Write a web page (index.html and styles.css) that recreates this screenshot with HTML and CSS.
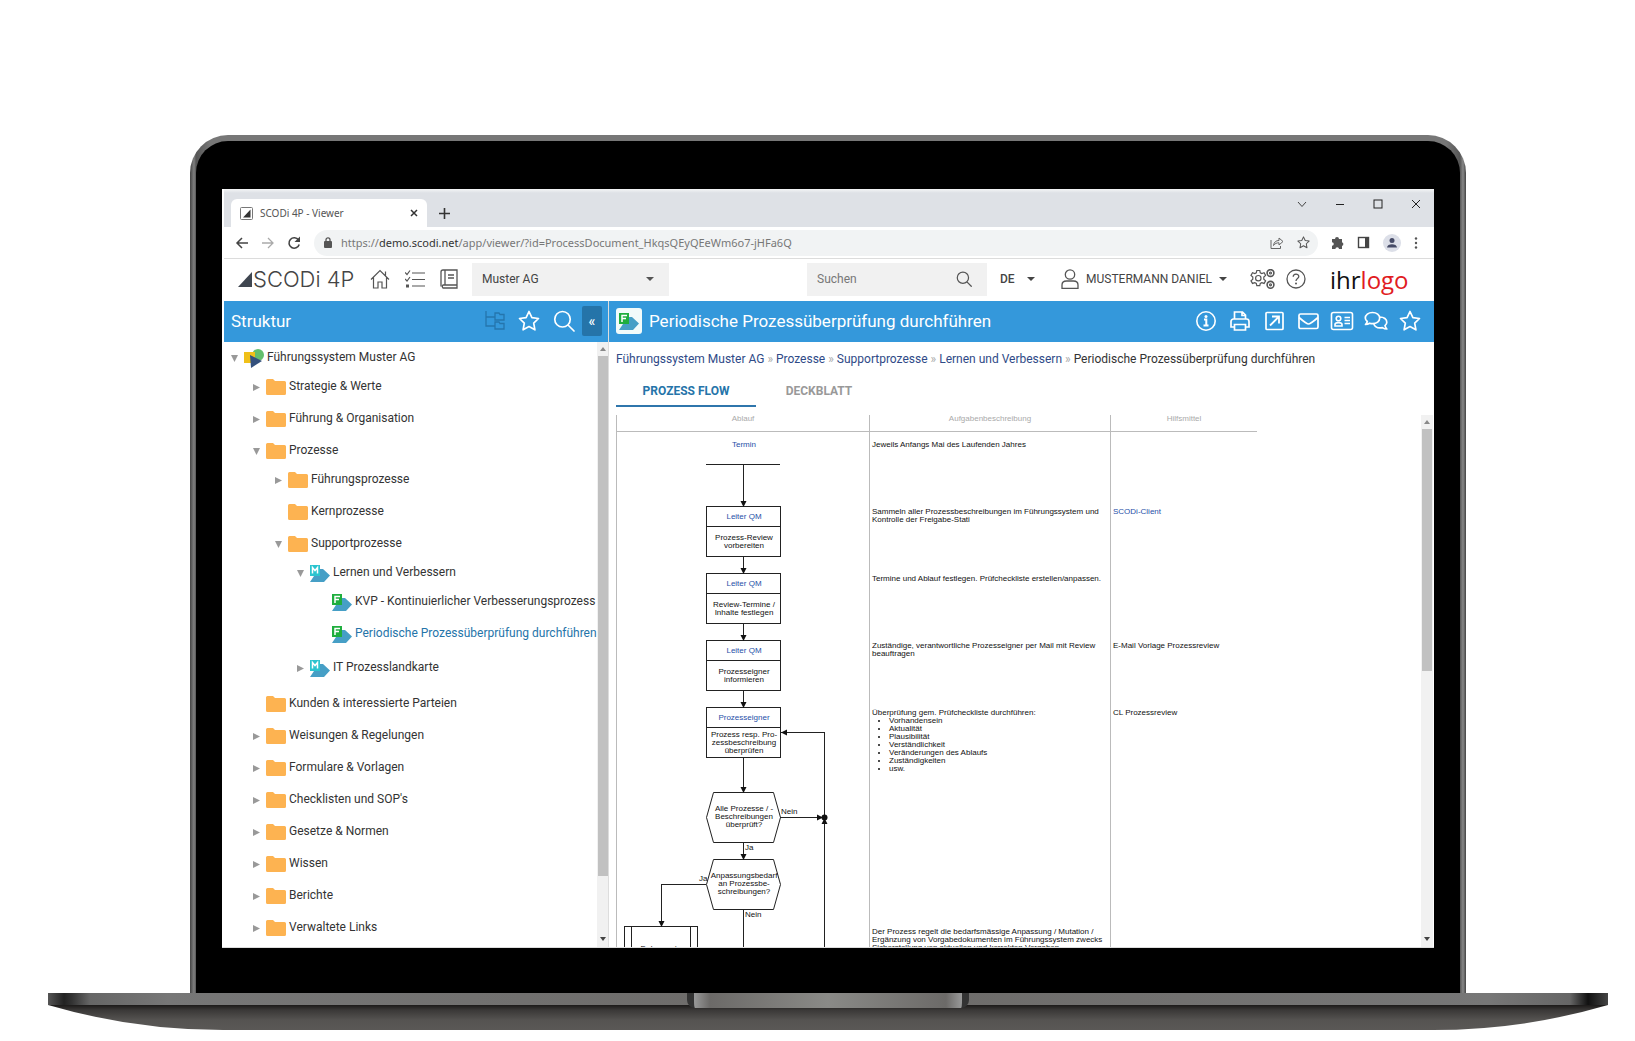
FILE: index.html
```html
<!DOCTYPE html>
<html lang="de">
<head>
<meta charset="utf-8">
<title>SCODi 4P - Viewer</title>
<link rel="stylesheet" href="styles.css">
</head>
<body>
<svg class="defs" aria-hidden="true">
  <symbol id="i-folder" viewBox="0 0 20 16"><path fill="#fdb351" d="M1.500 0H7l2 2h9.500A1.500 1.500 0 0 1 20 3.500v11a1.500 1.500 0 0 1-1.500 1.500h-17A1.500 1.500 0 0 1 0 14.500v-13A1.500 1.500 0 0 1 1.500 0z"/></symbol>
  <symbol id="i-map" viewBox="0 0 20 17"><path fill="#469fc6" d="M0 17l4-6V4h9l7 6.500-6 6.500z"/><rect width="10" height="11" fill="#2bc4cf"/><path fill="none" stroke="#fff" stroke-width="1.500" d="M2.500 8.500V2.500l2.500 3 2.500-3v6"/></symbol>
  <symbol id="i-flow" viewBox="0 0 20 17"><path fill="#469fc6" d="M0 17l4-6V4h9l7 6.500-6 6.500z"/><rect width="10" height="11" fill="#1fae3e"/><path fill="none" stroke="#fff" stroke-width="1.500" d="M3 9V2.500h5M3 5.500h4"/></symbol>
  <symbol id="i-star" viewBox="0 0 22 22"><path fill="none" stroke="currentColor" stroke-width="1.700" stroke-linejoin="round" d="M11 1.500l2.900 6.100 6.600.9-4.800 4.600 1.200 6.700-5.900-3.200-5.900 3.200 1.200-6.700L1.500 8.500l6.600-.9z"/></symbol>
  <symbol id="i-search" viewBox="0 0 22 22"><path fill="none" stroke="currentColor" stroke-width="1.700" stroke-linecap="round" d="M9.500 1.500a7.500 7.500 0 1 1 0 15.500A7.500 7.500 0 0 1 9.500 1.500zM15 15L21 21"/></symbol>
</svg>

<div class="laptop">
  <div class="lid">
    <div class="bezel">
      <div class="screen">

        <div class="tabstrip">
          <div class="browser-tab">
            <svg class="favicon" viewBox="0 0 13 13"><rect x=".5" y=".5" width="12" height="12" rx="1" fill="#fff" stroke="#777"/><path fill="#333" d="M3 10.500L10.500 2.500v8z"/></svg>
            <span class="tab-title">SCODi 4P - Viewer</span>
            <button class="bare" aria-label="Tab schliessen"><svg width="8" height="8" viewBox="0 0 8 8"><path stroke="#333" stroke-width="1.500" d="M1 1l6 6M7 1L1 7"/></svg></button>
          </div>
          <button class="bare new-tab" aria-label="Neuer Tab"><svg width="11" height="11" viewBox="0 0 11 11"><path stroke="#333" stroke-width="1.600" d="M5.500 0v11M0 5.500h11"/></svg></button>
          <div class="window-controls">
            <button class="bare" aria-label="Tabs suchen"><svg width="12" height="12" viewBox="0 0 12 12"><path fill="none" stroke="#444" d="M2 4l4 4.500L10 4"/></svg></button>
            <button class="bare" aria-label="Minimieren"><svg width="12" height="12" viewBox="0 0 12 12"><path stroke="#222" d="M2 6.500h8"/></svg></button>
            <button class="bare" aria-label="Maximieren"><svg width="12" height="12" viewBox="0 0 12 12"><rect x="2" y="2" width="8" height="8" fill="none" stroke="#222"/></svg></button>
            <button class="bare" aria-label="Schliessen"><svg width="12" height="12" viewBox="0 0 12 12"><path stroke="#222" d="M2 2l8 8M10 2l-8 8"/></svg></button>
          </div>
        </div>

        <div class="toolbar">
          <div class="history">
            <button class="bare" aria-label="Zurück"><svg width="14" height="14" viewBox="0 0 14 14"><path fill="none" stroke="#444" stroke-width="1.500" d="M13 7H2M7 2L2 7l5 5"/></svg></button>
            <button class="bare" aria-label="Vorwärts"><svg width="14" height="14" viewBox="0 0 14 14"><path fill="none" stroke="#aaa" stroke-width="1.300" d="M1 7h11M7 2l5 5-5 5"/></svg></button>
            <button class="bare" aria-label="Neu laden"><svg width="14" height="14" viewBox="0 0 14 14"><path fill="none" stroke="#444" stroke-width="1.600" d="M11.500 4A5.200 5.200 0 1 0 12.200 8.500"/><path fill="#444" d="M13 .5v5.500H7.500z"/></svg></button>
          </div>
          <div class="address">
            <svg width="8" height="11" viewBox="0 0 8 11"><rect y="4" width="8" height="7" rx="1" fill="#555"/><path fill="none" stroke="#555" stroke-width="1.300" d="M2 4.500V2.800a2 2 0 0 1 4 0v1.700"/></svg>
            <span class="url">https://<b>demo.scodi.net</b>/app/viewer/?id=ProcessDocument_HkqsQEyQEeWm6o7-jHFa6Q</span>
            <svg width="14" height="14" viewBox="0 0 14 14"><path fill="none" stroke="#666" d="M1 4v8.500h9.500V10M3.500 9.500C4 6 6 4.500 9 4.500V2l4 3.500L9 9V6.800C6.500 6.800 5 7.500 3.500 9.500z"/></svg>
            <svg class="addr-star" width="13" height="13"><use href="#i-star"/></svg>
          </div>
          <svg width="13" height="13" viewBox="0 0 13 13"><path fill="#555" d="M1 3h3a2 2 0 0 1 4 0h3v3.200a2 2 0 0 1 0 3.800v3H8a1.800 1.800 0 0 0-3.600 0H1v-3.200a1.800 1.800 0 0 0 0-3.600z"/></svg>
          <svg width="13" height="13" viewBox="0 0 13 13"><rect x="1.500" y="1.500" width="10" height="10" fill="none" stroke="#444" stroke-width="1.400"/><path fill="#444" d="M8 1h4v11H8z"/></svg>
          <svg width="18" height="18" viewBox="0 0 18 18"><circle cx="9" cy="9" r="9" fill="#dcdfe8"/><circle cx="9" cy="6.500" r="2.500" fill="#454a66"/><path fill="#454a66" d="M4 13.500c0-4.500 10-4.500 10 0z"/></svg>
          <svg width="4" height="12" viewBox="0 0 4 12"><g fill="#555"><circle cx="2" cy="1.500" r="1.200"/><circle cx="2" cy="6" r="1.200"/><circle cx="2" cy="10.500" r="1.200"/></g></svg>
        </div>

        <header class="app-header">
          <a class="brand" href="#"><svg width="15" height="15" viewBox="0 0 15 15"><path fill="#3f4650" d="M0 15L14 0v15z"/></svg><span>SCODi 4P</span></a>
          <nav class="app-nav">
            <a href="#" aria-label="Start"><svg width="20" height="20" viewBox="0 0 20 20"><path fill="none" stroke="#555" stroke-width="1.200" d="M1 10.500L10 1.500l9 9M3.500 8.500v10.500h4.500v-6h4v6h4.500V8.500M15.500 6.500v-4"/></svg></a>
            <a href="#" aria-label="Aufgaben"><svg width="20" height="20" viewBox="0 0 20 20"><path fill="none" stroke="#555" stroke-width="1.200" d="M7 4h13M7 10.500h13M7 17h13M0 3.500l2 2 3-4M0 10l2 2 3-4"/><rect x="1" y="15.500" width="3" height="3" fill="#555"/></svg></a>
            <a href="#" aria-label="Handbuch"><svg width="18" height="20" viewBox="0 0 18 20"><path fill="none" stroke="#555" stroke-width="1.300" d="M3 1h14v15H3a2 2 0 0 0 0 3h14v-3M3 1a2 2 0 0 0-2 2v14.500M5 1v15M8 6h6M8 9h6"/></svg></a>
          </nav>
          <select class="org" aria-label="Organisation"><option>Muster AG</option></select>
          <label class="search"><input type="text" placeholder="Suchen" aria-label="Suchen"><svg width="16" height="16"><use href="#i-search"/></svg></label>
          <button class="bare menu-btn lang">DE <i class="caret"></i></button>
          <button class="bare menu-btn user"><svg width="18" height="20" viewBox="0 0 18 20"><g fill="none" stroke="#555" stroke-width="1.300"><circle cx="9" cy="5.500" r="4.700"/><path d="M1 19.300V16c0-3 2-4 4.500-4h7c2.500 0 4.500 1 4.500 4v3.300z"/></g></svg><span>MUSTERMANN DANIEL</span><i class="caret"></i></button>
          <button class="bare gears" aria-label="Einstellungen"><svg width="25" height="20" viewBox="0 0 25 20"><g fill="none" stroke="#555" stroke-width="1.200"><path d="M6.800 1.500h3l.5 2.300 1.500.8 2.300-.8 1.500 2.600-1.800 1.600v2.200l1.800 1.600-1.500 2.600-2.300-.8-1.500.8-.5 2.300h-3l-.5-2.300-1.500-.8-2.300.8L1 11.800l1.800-1.600V8L1 6.400l1.500-2.600 2.300.8 1.500-.8z"/><circle cx="8.300" cy="9.200" r="2.700"/><circle cx="20.500" cy="4" r="3.400" stroke-width="1.600"/><circle cx="20.500" cy="4" r="1"/><circle cx="20.500" cy="15.800" r="3.400" stroke-width="1.600"/><circle cx="20.500" cy="15.800" r="1"/></g></svg></button>
          <button class="bare help" aria-label="Hilfe"><svg width="20" height="20" viewBox="0 0 20 20"><g fill="none" stroke="#555" stroke-width="1.300"><circle cx="10" cy="10" r="9"/><path d="M7.200 7.800c0-3.600 5.600-3.600 5.600-.3 0 2-2.800 2.200-2.800 4.500"/></g><circle cx="10" cy="14.500" r="1" fill="#555"/></svg></button>
          <a class="customer" href="#">ihr<span>logo</span></a>
        </header>

        <div class="workspace">
          <aside class="sidebar">
            <div class="bar">
              <h2>Struktur</h2>
              <div class="bar-tools">
                <button class="bare dim" aria-label="Strukturansicht"><svg width="20" height="20" viewBox="0 0 20 20"><path fill="none" stroke="currentColor" stroke-width="1.300" d="M1 0v15h9M1 6h9M10 2h4l1 1.500h4V9h-9zM10 11h4l1 1.500h4V18h-9z"/></svg></button>
                <button class="bare" aria-label="Favoriten"><svg width="22" height="22"><use href="#i-star"/></svg></button>
                <button class="bare" aria-label="Suchen"><svg width="22" height="22"><use href="#i-search"/></svg></button>
              </div>
              <button class="collapse" aria-label="Einklappen">«</button>
            </div>
            <div class="pane">
              <ul class="tree">
                <li><a href="#"><i class="tw open"></i><svg class="ico" width="20" height="19" viewBox="0 0 20 19"><circle cx="14" cy="6" r="6" fill="#63bf6c"/><rect y="3" width="11" height="11" fill="#f0c019"/><path fill="#34507d" d="M6 6l12 6-11 7z"/></svg>Führungssystem Muster AG</a>
                <ul>
                  <li><a href="#"><i class="tw"></i><svg class="ico" width="20" height="16"><use href="#i-folder"/></svg>Strategie &amp; Werte</a></li>
                  <li><a href="#"><i class="tw"></i><svg class="ico" width="20" height="16"><use href="#i-folder"/></svg>Führung &amp; Organisation</a></li>
                  <li><a href="#"><i class="tw open"></i><svg class="ico" width="20" height="16"><use href="#i-folder"/></svg>Prozesse</a>
                  <ul>
                    <li><a href="#"><i class="tw"></i><svg class="ico" width="20" height="16"><use href="#i-folder"/></svg>Führungsprozesse</a></li>
                    <li><a href="#"><i class="tw none"></i><svg class="ico" width="20" height="16"><use href="#i-folder"/></svg>Kernprozesse</a></li>
                    <li><a href="#"><i class="tw open"></i><svg class="ico" width="20" height="16"><use href="#i-folder"/></svg>Supportprozesse</a>
                    <ul>
                      <li><a href="#"><i class="tw open"></i><svg class="ico" width="20" height="17"><use href="#i-map"/></svg>Lernen und Verbessern</a>
                      <ul>
                        <li><a href="#"><i class="tw none"></i><svg class="ico" width="20" height="17"><use href="#i-flow"/></svg>KVP - Kontinuierlicher Verbesserungsprozess</a></li>
                        <li><a href="#" class="current"><i class="tw none"></i><svg class="ico" width="20" height="17"><use href="#i-flow"/></svg>Periodische Prozessüberprüfung durchführen</a></li>
                      </ul></li>
                      <li><a href="#"><i class="tw"></i><svg class="ico" width="20" height="17"><use href="#i-map"/></svg>IT Prozesslandkarte</a></li>
                    </ul></li>
                  </ul></li>
                  <li><a href="#"><i class="tw none"></i><svg class="ico" width="20" height="16"><use href="#i-folder"/></svg>Kunden &amp; interessierte Parteien</a></li>
                  <li><a href="#"><i class="tw"></i><svg class="ico" width="20" height="16"><use href="#i-folder"/></svg>Weisungen &amp; Regelungen</a></li>
                  <li><a href="#"><i class="tw"></i><svg class="ico" width="20" height="16"><use href="#i-folder"/></svg>Formulare &amp; Vorlagen</a></li>
                  <li><a href="#"><i class="tw"></i><svg class="ico" width="20" height="16"><use href="#i-folder"/></svg>Checklisten und SOP's</a></li>
                  <li><a href="#"><i class="tw"></i><svg class="ico" width="20" height="16"><use href="#i-folder"/></svg>Gesetze &amp; Normen</a></li>
                  <li><a href="#"><i class="tw"></i><svg class="ico" width="20" height="16"><use href="#i-folder"/></svg>Wissen</a></li>
                  <li><a href="#"><i class="tw"></i><svg class="ico" width="20" height="16"><use href="#i-folder"/></svg>Berichte</a></li>
                  <li><a href="#"><i class="tw"></i><svg class="ico" width="20" height="16"><use href="#i-folder"/></svg>Verwaltete Links</a></li>
                </ul></li>
              </ul>
              <div class="scrollbar"><i class="up"></i><div class="thumb side-thumb"></div><i class="down"></i></div>
            </div>
          </aside>

          <main class="main">
            <div class="bar">
              <span class="doc-icon"><svg width="20" height="17"><use href="#i-flow"/></svg></span>
              <h1>Periodische Prozessüberprüfung durchführen</h1>
              <div class="doc-tools">
                <button class="bare" aria-label="Info"><svg width="22" height="22" viewBox="0 0 22 22"><circle cx="11" cy="11" r="9.200" fill="none" stroke="currentColor" stroke-width="1.600"/><circle cx="11" cy="6.500" r="1.500" fill="currentColor"/><path fill="none" stroke="currentColor" stroke-width="2" d="M9 9.500h2.300v6M8.500 15.500h5"/></svg></button>
                <button class="bare" aria-label="Drucken"><svg width="22" height="22" viewBox="0 0 22 22"><path fill="none" stroke="currentColor" stroke-width="1.700" d="M5.500 9V2h8l3 3v4M13 2v3.500h3.500M5 17H2v-5.500A2.500 2.500 0 0 1 4.500 9h13a2.500 2.500 0 0 1 2.500 2.500V17h-3M5.500 14.500h11V20h-11z"/></svg></button>
                <button class="bare" aria-label="Öffnen"><svg width="22" height="22" viewBox="0 0 22 22"><rect x="3" y="2.500" width="17" height="17" rx="1" fill="none" stroke="currentColor" stroke-width="1.700"/><path fill="none" stroke="currentColor" stroke-width="1.800" d="M7 15.500l8.500-8.500M9 6.500h7v7"/></svg></button>
                <button class="bare" aria-label="E-Mail"><svg width="22" height="22" viewBox="0 0 22 22"><rect x="2" y="4" width="19" height="14.500" rx="1.500" fill="none" stroke="currentColor" stroke-width="1.700"/><path fill="none" stroke="currentColor" stroke-width="1.700" d="M2 7.500c7 6 8 6.500 9.500 6.500s2.500-.5 9.500-6.500"/></svg></button>
                <button class="bare" aria-label="Kontakt"><svg width="24" height="22" viewBox="0 0 24 22"><g fill="none" stroke="currentColor" stroke-width="1.600"><rect x="1.500" y="2.500" width="21" height="17" rx="2"/><circle cx="8.500" cy="8.500" r="2.300"/><path d="M5 16v-1.500c0-2.500 7-2.500 7 0V16zM14.500 7.500h5.500M14.500 10.500h5.500M14.500 13.500h5.500"/></g></svg></button>
                <button class="bare" aria-label="Kommentare"><svg width="24" height="22" viewBox="0 0 24 22"><path fill="none" stroke="currentColor" stroke-width="1.700" stroke-linejoin="round" d="M8.500 2.500c4.200 0 7.200 2.400 7.200 5.600s-3 5.600-7.200 5.600c-1 0-2-.2-2.800-.5-1.200.8-2.500 1.300-4.200 1.300 1-1 1.600-2 1.800-3-1.300-1-2-2-2-3.400 0-3.200 3-5.600 7.200-5.600zM16 7c4 0 6.800 2.300 6.800 5.200 0 1.400-.7 2.500-1.800 3.400.2 1 .8 2.200 1.800 3.400-1.800 0-3.200-.6-4.400-1.400-4 .9-7.400-.6-8.600-3.600"/></svg></button>
                <button class="bare" aria-label="Favorit"><svg width="22" height="22"><use href="#i-star"/></svg></button>
              </div>
            </div>
            <nav class="crumbs"><a href="#">Führungssystem Muster AG</a> <i>»</i> <a href="#">Prozesse</a> <i>»</i> <a href="#">Supportprozesse</a> <i>»</i> <a href="#">Lernen und Verbessern</a> <i>»</i> <span>Periodische Prozessüberprüfung durchführen</span></nav>
            <div class="tabs" role="tablist">
              <button role="tab" aria-selected="true" class="tab active">PROZESS FLOW</button>
              <button role="tab" aria-selected="false" class="tab">DECKBLATT</button>
            </div>
            <div class="pane">
              <div class="flow-view">
                <table class="flow">
                  <thead><tr><th class="c-flow">Ablauf</th><th class="c-task">Aufgabenbeschreibung</th><th class="c-aid">Hilfsmittel</th></tr></thead>
                  <tbody>
                    <tr><td class="canvas" rowspan="6">
                      <svg class="chart" width="252" height="550" viewBox="0 1 252 550">
                        <g fill="none" stroke="#222" shape-rendering="crispEdges">
                          <path d="M89 33.500h74M126.500 33v40M126.500 125v15M126.500 192v15M126.500 260v14M126.500 327v32M126.500 411v16M126.500 478v82"/>
                          <path d="M89.500 75.500h74v50h-74zM89.500 95.500h74M89.500 142.500h74v50h-74zM89.500 162.500h74M89.500 209.500h74v50h-74zM89.500 229.500h74M89.500 276.500h74v50h-74zM89.500 296.500h74"/>
                          <path d="M164 301.500h43.500V560M163 386.500h42M89 453.500H44.500V490M7.500 560v-64.500h73V560M14.500 496v64M73.500 496v64"/>
                        </g>
                        <path fill="none" stroke="#222" d="M96.500 361.500h60l7 25-7 25h-60l-7-25zM96.500 428.500h60l7 25-7 25h-60l-7-25z"/>
                        <path fill="#111" d="M123.500 70h6l-3 6zM123.500 137h6l-3 6zM123.500 204h6l-3 6zM123.500 271h6l-3 6zM123.500 356h6l-3 6zM123.500 423h6l-3 6zM41.500 490h6l-3 6zM170 298.500v6l-6-3zM200 383.500v6l6-3zM204.500 393h6l-3-6z"/>
                        <circle cx="207.500" cy="386.500" r="3" fill="#111"/>
                        <g class="role"><text x="127" y="16">Termin</text><text x="127" y="88">Leiter QM</text><text x="127" y="155">Leiter QM</text><text x="127" y="222">Leiter QM</text><text x="127" y="289">Prozesseigner</text></g>
                        <g class="step">
                          <text x="127" y="109">Prozess-Review</text><text x="127" y="117">vorbereiten</text>
                          <text x="127" y="176">Review-Termine /</text><text x="127" y="184">Inhalte festlegen</text>
                          <text x="127" y="243">Prozesseigner</text><text x="127" y="251">informieren</text>
                          <text x="127" y="306">Prozess resp. Pro-</text><text x="127" y="314">zessbeschreibung</text><text x="127" y="322">überprüfen</text>
                          <text x="127" y="380">Alle Prozesse / -</text><text x="127" y="388">Beschreibungen</text><text x="127" y="396">überprüft?</text>
                          <text x="127" y="447">Anpassungsbedarf</text><text x="127" y="455">an Prozessbe-</text><text x="127" y="463">schreibungen?</text>
                          <text x="44" y="520">Dokumente</text>
                        </g>
                        <g class="branch"><text x="164" y="383">Nein</text><text x="128" y="419">Ja</text><text x="82" y="450">Ja</text><text x="128" y="486">Nein</text></g>
                      </svg></td>
                      <td>Jeweils Anfangs Mai des Laufenden Jahres</td><td></td></tr>
                    <tr><td>Sammeln aller Prozessbeschreibungen im Führungssystem und<br>Kontrolle der Freigabe-Stati</td><td><a href="#">SCODi-Client</a></td></tr>
                    <tr><td>Termine und Ablauf festlegen. Prüfcheckliste erstellen/anpassen.</td><td></td></tr>
                    <tr><td>Zuständige, verantwortliche Prozesseigner per Mail mit Review<br>beauftragen</td><td>E-Mail Vorlage Prozessreview</td></tr>
                    <tr class="tall"><td>Überprüfung gem. Prüfcheckliste durchführen:
                      <ul><li>Vorhandensein</li><li>Aktualität</li><li>Plausibilität</li><li>Verständlichkeit</li><li>Veränderungen des Ablaufs</li><li>Zuständigkeiten</li><li>usw.</li></ul></td><td>CL Prozessreview</td></tr>
                    <tr><td>Der Prozess regelt die bedarfsmässige Anpassung / Mutation /<br>Ergänzung von Vorgabedokumenten im Führungssystem zwecks<br>Sicherstellung von aktuellen und korrekten Vorgaben.</td><td></td></tr>
                  </tbody>
                </table>
              </div>
              <div class="scrollbar"><i class="up"></i><div class="thumb main-thumb"></div><i class="down"></i></div>
            </div>
          </main>
        </div>
      </div>
    </div>
  </div>
  <div class="base">
    <div class="deck"><div class="notch"></div></div>
    <svg class="belly" viewBox="0 0 1560 25" preserveAspectRatio="none">
      <defs><linearGradient id="belly" x1="0" y1="0" x2="0" y2="1"><stop offset="0" stop-color="#1c1a19"/><stop offset=".2" stop-color="#3a3837"/><stop offset=".6" stop-color="#555351"/><stop offset="1" stop-color="#5a5856"/></linearGradient></defs>
      <path fill="url(#belly)" d="M0 0H1560Q1475 25 1385 25H175Q85 25 0 0z"/>
    </svg>
  </div>
</div>
</body>
</html>
```
FILE: styles.css
```css
* { box-sizing: border-box; }
body { margin: 0; background: #fff; font-family: Roboto, "Liberation Sans", sans-serif; font-size: 12px; color: #333; }
.defs { position: absolute; width: 0; height: 0; }
a { color: inherit; text-decoration: none; }
h1, h2 { margin: 0; font-size: 17px; font-weight: 400; }
svg { display: block; flex: none; }
.bare { display: flex; align-items: center; justify-content: center; flex: none; padding: 0; border: 0; background: none; color: inherit; font: inherit; }

/* laptop */
.laptop { display: flex; flex-direction: column; height: 100vh; min-height: 600px; padding: 135px 27px 11px 48px; }
.lid { display: flex; flex: 1; min-height: 0; margin: 0 142px; padding: 6px 6px 0; border-radius: 38px 38px 0 0; background: linear-gradient(90deg, #444 0, #808080 4px, #555 6px, #777 20px, #777 calc(100% - 20px), #555 calc(100% - 6px), #888 calc(100% - 3px), #444 100%); }
.bezel { display: flex; flex: 1; min-width: 0; padding: 48px 26px 45px; border-radius: 32px 32px 0 0; background: #000; }
.screen { display: flex; flex: 1; flex-direction: column; min-width: 0; padding-left: 2px; overflow: hidden; border-bottom: 1px solid #ddd; background: #fff; }
.deck { display: flex; justify-content: center; height: 12px; background: linear-gradient(90deg, #555 0, #222 16px, #333 24px, #666 42px, #777 120px, #6c6a68 50%, #777 calc(100% - 120px), #666 calc(100% - 38px), #111 calc(100% - 20px), #444 100%); }
.notch { position: relative; width: 282px; height: 15px; border: solid #333; border-width: 0 7px; border-radius: 0 0 8px 8px; background: linear-gradient(90deg, #999 0, #6c6a68 16px, #8a8a87 50%, #6c6a68 calc(100% - 16px), #999 100%); }
.belly { width: 100%; height: 25px; }

/* browser */
.tabstrip { display: flex; align-items: flex-end; flex: none; height: 38px; padding: 0 12px 0 7px; background: linear-gradient(#f4f5f6 0, #dee1e6 4px); }
.browser-tab { display: flex; align-items: center; width: 196px; height: 28px; padding: 0 9px; gap: 7px; border-radius: 6px 6px 0 0; background: #fff; color: #555; }
.favicon { width: 13px; height: 13px; }
.tab-title { flex: 1; font: 10px "Noto Sans", "Open Sans", sans-serif; }
.new-tab { width: 35px; height: 28px; }
.window-controls { display: flex; align-self: flex-start; gap: 26px; margin-left: auto; padding-top: 9px; }
.toolbar { display: flex; align-items: center; flex: none; height: 32px; padding: 0 16px 0 11px; gap: 13px; border-bottom: 1px solid #dcdcdc; }
.history { display: flex; gap: 12px; }
.toolbar .bare { width: 14px; }
.address { display: flex; align-items: center; flex: 1; height: 26px; padding: 0 8px 0 10px; gap: 9px; border-radius: 13px; background: #f1f3f4; }
.url { flex: 1; font: 11px "Noto Sans", "Open Sans", sans-serif; color: #777; white-space: nowrap; }
.url b { font-weight: 400; color: #333; }
.addr-star { margin-left: 4px; color: #555; }

/* application header */
.app-header { display: flex; align-items: center; flex: none; height: 42px; padding: 0 24px 2px 14px; }
.brand { display: flex; align-items: center; width: 132px; font: 300 22px Inter, sans-serif; color: #444; white-space: nowrap; }
.app-nav { display: flex; align-items: center; gap: 15px; width: 102px; }
.org { width: 197px; height: 33px; padding: 0 10px; border: 0; border-radius: 0; appearance: none; background: #f1f1f1 url("data:image/svg+xml,%3Csvg xmlns='http://www.w3.org/2000/svg' width='8' height='5'%3E%3Cpath fill='%23555' d='M0 0h8L4 4z'/%3E%3C/svg%3E") no-repeat right 15px center; color: #444; font: 12px Roboto, sans-serif; }
.search { display: flex; align-items: center; width: 180px; height: 33px; margin-left: auto; padding: 0 15px 0 10px; background: #f1f1f1; color: #555; }
.search input { flex: 1; min-width: 0; padding: 0; border: 0; outline: 0; background: none; font: 12px Roboto, sans-serif; color: #444; }
.search input::placeholder { color: #777; opacity: 1; }
.menu-btn { justify-content: space-between; color: #444; font-size: 12px; white-space: nowrap; }
.lang { width: 35px; margin-left: 13px; font-weight: 500; }
.user { width: 166px; margin-left: 26px; }
.caret { border: 4px solid transparent; border-top-color: #444; border-bottom: 0; }
.gears { margin-left: 23px; }
.help { margin-left: 11px; }
.customer { width: 80px; margin-left: 24px; font: 24px "Open Sans", sans-serif; color: #111; }
.customer span { color: #e11b22; }

/* workspace */
.workspace { display: flex; flex: 1; min-height: 0; }
.sidebar, .main { display: flex; flex-direction: column; min-width: 0; min-height: 0; }
.sidebar { width: 385px; flex: none; border-right: 1px solid #ddd; }
.main { flex: 1; }
.bar { display: flex; align-items: center; flex: none; height: 41px; padding: 0 6px 1px 7px; background: #3498db; color: #fff; }
.bar h1, .bar h2 { flex: 1; white-space: nowrap; }
.bar-tools { display: flex; align-items: center; gap: 13px; margin-right: 7px; }
.dim { color: #2575ad; }
.collapse { width: 20px; height: 30px; padding: 0; border: 0; border-radius: 2px; background: #2574a9; color: #fff; font: 500 14px Roboto, sans-serif; }
.doc-icon { display: flex; align-items: center; justify-content: center; width: 26px; height: 26px; margin-right: 7px; border-radius: 3px; background: #f2fbfa; }
.doc-tools { display: flex; align-items: center; gap: 10px; margin-right: 6px; }
.doc-tools .bare { width: 24px; }
.pane { display: flex; flex: 1; min-height: 0; justify-content: space-between; overflow: hidden; }

/* tree */
.tree, .tree ul { margin: 0; padding: 0; list-style: none; }
.tree { flex: 1; margin-top: -1px; padding-left: 5px; white-space: nowrap; }
.tree ul { margin-top: -3px; padding: 0 0 2px 22px; }
.tree a { display: flex; align-items: center; height: 32px; font-size: 12px; }
.tree .current { color: #2574a9; }
.ico { margin: 2px 3px 0 0; }
.tw { flex: none; width: 7px; height: 7px; margin: 3px 6px 0 2px; background: #999; clip-path: polygon(0 0, 100% 50%, 0 100%); }
.tw.open { clip-path: polygon(0 0, 100% 0, 50% 100%); }
.tw.none { background: none; }

/* scrollbars */
.scrollbar { display: flex; flex-direction: column; align-items: center; flex: none; width: 12px; margin-right: 1px; background: #f1f1f1; }
.thumb { width: 10px; background: #c1c1c1; }
.side-thumb { height: 86%; }
.main-thumb { height: 242px; }
.up, .down { flex: none; border: 3px solid transparent; }
.up { margin: 5px 0; border-top: 0; border-bottom: 4px solid #888; }
.down { margin: auto 0 6px; border-bottom: 0; border-top: 4px solid #444; }

/* document */
.crumbs { padding: 10px 7px 0; font-size: 12px; line-height: 14px; color: #333; white-space: nowrap; }
.crumbs a { color: #2f4a87; }
.crumbs i { font-style: normal; color: #aaa; }
.tabs { display: flex; padding: 11px 7px 0; margin-bottom: 8px; }
.tab { width: 126px; height: 30px; padding: 0; border: 0; border-bottom: 2px solid transparent; background: none; color: #999; font: bold 12px Roboto, sans-serif; }
.tab.active { width: 140px; border-color: #2f76ac; color: #2574a9; }
.flow-view { flex: 1; padding-left: 7px; overflow: hidden; }
.flow { width: 641px; border-collapse: separate; border-spacing: 0; table-layout: fixed; font: 8px/8px "Liberation Sans", sans-serif; color: #111; }
.flow th { height: 17px; padding: 0; border-left: 1px solid #bbb; border-bottom: 1px solid #bbb; color: #aaa; font-weight: 400; vertical-align: top; }
.c-flow { width: 253px; }
.c-task { width: 241px; }
.flow td { height: 67px; padding: 9px 0 0 2px; border-left: 1px solid #bbb; vertical-align: top; white-space: nowrap; }
.flow td.canvas { padding: 0; height: auto; }
.flow .tall td { height: 219px; }
.flow td ul { margin: 0; padding-left: 17px; }
.flow td a { color: #1f4fa8; }
.chart text { font: 8px "Liberation Sans", sans-serif; text-anchor: middle; fill: #111; }
.chart .role text { fill: #1f4fa8; }
.chart .branch text { text-anchor: start; }
```
